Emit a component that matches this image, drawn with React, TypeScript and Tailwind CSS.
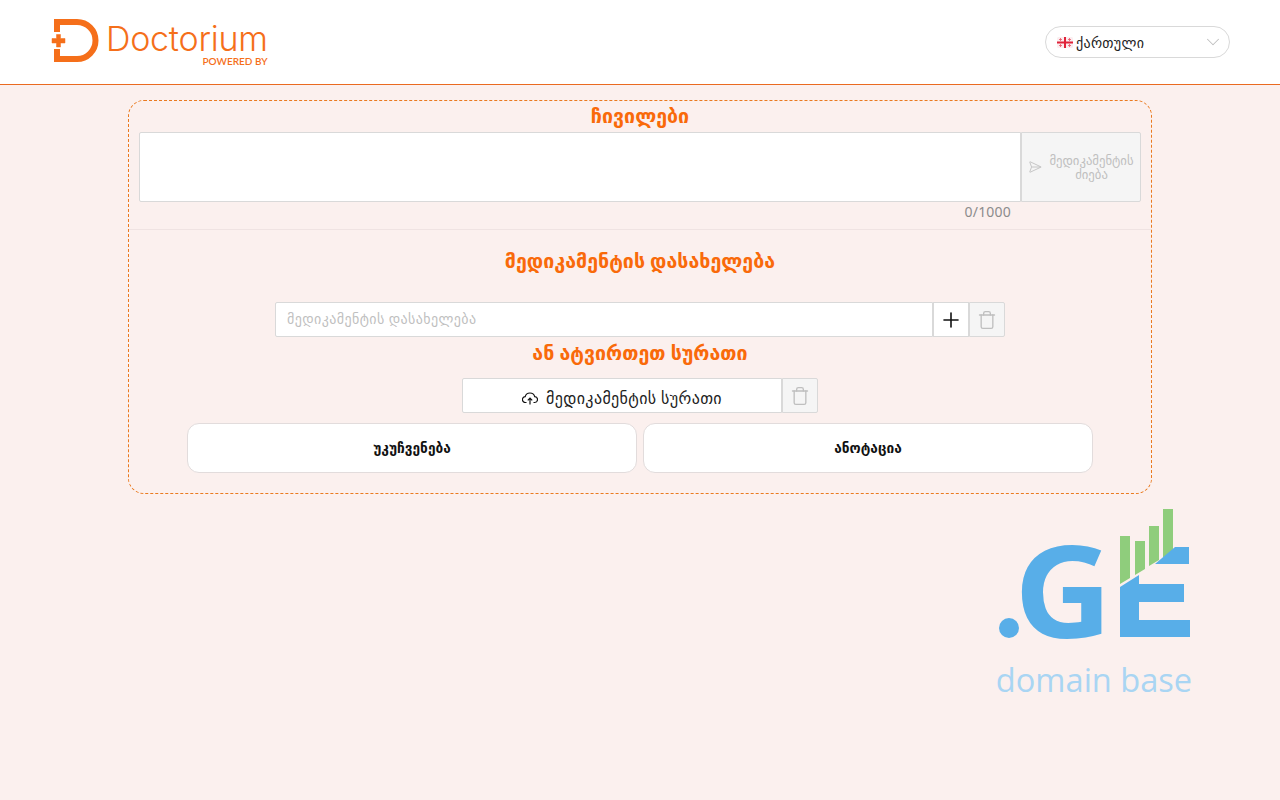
import { ChevronDown, Plus, SendHorizontal, Trash } from "lucide-react";

const font = "font-['Noto_Sans','DejaVu_Sans','Open_Sans',sans-serif]";

function DoctoriumLogo() {
  return (
    <div className="flex items-start">
      <svg width="52" height="46" viewBox="0 0 52 46" className="shrink-0">
        <path d="M7 14V4H27A18.500 18.500 0 0 1 27 41H7V31" fill="none" stroke="#f56f1a" strokeWidth="6" />
        <path d="M6.500 16.500h4v4H15v4.500h-4.500v4h-4v-4H2v-4.500h4.500z" fill="#f56f1a" stroke="#f56f1a" strokeWidth="0.5" strokeLinejoin="round" />
      </svg>
      <div className="ml-[4px] flex flex-col items-end font-['Inter',sans-serif] text-[#f56f1a]">
        <span className="text-[34px] leading-[42px] font-light tracking-[-0.25px]">Doctorium</span>
        <span className="mt-[-5px] font-['Lato',sans-serif] text-[10px] leading-[12px] font-semibold">POWERED BY</span>
      </div>
    </div>
  );
}

function GeorgianFlag() {
  return (
    <svg width="16" height="11" viewBox="0 0 16 11" className="shrink-0">
      <rect width="16" height="11" rx="1.500" fill="#fbeef0" />
      <rect x="7" width="2" height="11" fill="#e0233a" />
      <rect y="4.500" width="16" height="2" fill="#e0233a" />
      <path d="M3.500 1v3M2 2.500h3M12.500 1v3M11 2.500h3M3.500 7v3M2 8.500h3M12.500 7v3M11 8.500h3" stroke="#e8556a" strokeWidth="0.8" fill="none" />
    </svg>
  );
}

function UploadIcon() {
  return (
    <svg width="16" height="13" viewBox="0 0 16 13" fill="none" stroke="#111" strokeWidth="1.2" className="shrink-0">
      <path d="M4.500 10.500H3.500A2.900 2.900 0 0 1 3.200 4.700A4.900 4.900 0 0 1 12.700 4.700A2.900 2.900 0 0 1 12.500 10.500H11.500" />
      <path d="M8 12.500V6.300M5.800 8.400L8 6.200L10.200 8.400" />
    </svg>
  );
}

function GeLogo() {
  return (
    <div className="flex w-[204px] flex-col items-center">
      <svg width="200" height="136" viewBox="0 0 200 136" className="block">
        <circle cx="15" cy="119" r="10" fill="#58aee8" />
        <text transform="translate(20 129) scale(1.06 1)" fontFamily="Open Sans" fontWeight="700" fontSize="128" fill="#58aee8">G</text>
        <path d="M126 27h10v42l-10 6zM141 32h10v28l-10 6zM155 17h10v34l-10 6zM169 0h10v43l-10 6z" fill="#8fcd7c" />
        <path d="M126 78L145 66V75H190V93H145V111H196V128H126ZM161 55L181 38H195V55Z" fill="#58aee8" />
      </svg>
      <span className="mt-[13px] font-['Open_Sans',sans-serif] text-[32.6px] leading-[44px] text-[#a9d5f3]">domain base</span>
    </div>
  );
}

export default function App() {
  return (
    <div className={`${font} min-h-[800px] bg-[#fbf0ee]`}>
      <header className="flex h-[85px] items-center justify-between border-b border-[#ea6a20] bg-white pr-[50px] pl-[50px]">
        <DoctoriumLogo />
        <div className="flex h-[32px] w-[185px] items-center rounded-full border border-[#d9d9d9] bg-white pr-[5px] pl-[11px] text-[14px] tracking-[0.3px] text-[#222]">
          <GeorgianFlag />
          <span className="ml-[3px] flex-1">ქართული</span>
          <ChevronDown className="h-[22px] w-[22px] text-[#bfbfbf]" strokeWidth={1.1} />
        </div>
      </header>

      <main className="mx-auto mt-[15px] flex h-[394px] w-[1024px] flex-col rounded-2xl border border-dashed border-[#ea7a1f] px-[10px] pt-[1px]">
        <h2 className="text-center text-[19.6px] leading-[27px] font-bold text-[#f96a0a]">ჩივილები</h2>
        <div className="mt-[3px] flex h-[70px]">
          <textarea className="flex-1 resize-none rounded-l-[2px] border border-[#d9d9d9] bg-white outline-none" />
          <button className="flex w-[120px] items-center justify-center gap-[7px] rounded-r-[2px] border border-[#d9d9d9] bg-[#f5f5f5] text-[#bfbfbf]">
            <SendHorizontal className="h-[14px] w-[14px] shrink-0" strokeWidth={1.5} />
            <span className="w-[86px] text-center text-[12.7px] leading-[14px]">მედიკამენტის ძიება</span>
          </button>
        </div>
        <div className="flex justify-end pr-[130px] text-[14px] leading-[20px] tracking-[0.2px] text-[#8c8c8c]">0/1000</div>
        <div className="mx-[-10px] mt-[7px] border-t border-[#efe3e2]" />

        <h2 className="mt-[17px] text-center text-[19.6px] leading-[27px] font-bold text-[#f96a0a]">მედიკამენტის დასახელება</h2>
        <div className="mt-[28px] flex h-[35px] justify-center">
          <input
            className="w-[658px] rounded-l-[2px] border border-[#d9d9d9] bg-white px-[11px] pb-[2px] text-[14px] tracking-[0.4px] outline-none placeholder:text-[#bfbfbf]"
            placeholder="მედიკამენტის დასახელება"
          />
          <button className="flex w-[36px] items-center justify-center border border-[#d9d9d9] bg-white text-[#111]">
            <Plus className="h-[24px] w-[24px]" strokeWidth={1.6} />
          </button>
          <button className="flex w-[36px] items-center justify-center rounded-r-[2px] border border-[#d9d9d9] bg-[#f5f5f5] text-[#bfbfbf]">
            <Trash className="h-[20px] w-[20px]" strokeWidth={1.6} />
          </button>
        </div>

        <h2 className="mt-[2px] text-center text-[19.6px] leading-[27px] font-bold text-[#f96a0a]">ან ატვირთეთ სურათი</h2>
        <div className="mt-[12px] flex h-[35px] justify-center">
          <button className="flex w-[320px] items-center justify-center gap-[8px] rounded-l-[2px] border border-[#d9d9d9] bg-white pt-[5px] text-[16px] tracking-[0.37px] text-[#222]">
            <UploadIcon />
            მედიკამენტის სურათი
          </button>
          <button className="flex w-[36px] items-center justify-center rounded-r-[2px] border border-[#d9d9d9] bg-[#f5f5f5] text-[#bfbfbf]">
            <Trash className="h-[20px] w-[20px]" strokeWidth={1.6} />
          </button>
        </div>

        <div className="mt-[10px] flex justify-center gap-[6px]">
          <button className="h-[50px] w-[450px] rounded-[12px] border border-[#e2dcdc] bg-white text-[13.7px] font-semibold text-[#111]">უკუჩვენება</button>
          <button className="h-[50px] w-[450px] rounded-[12px] border border-[#e2dcdc] bg-white text-[13.7px] font-semibold text-[#111]">ანოტაცია</button>
        </div>
      </main>

      <div className="flex justify-end pt-[15px] pr-[84px]">
        <GeLogo />
      </div>
    </div>
  );
}
